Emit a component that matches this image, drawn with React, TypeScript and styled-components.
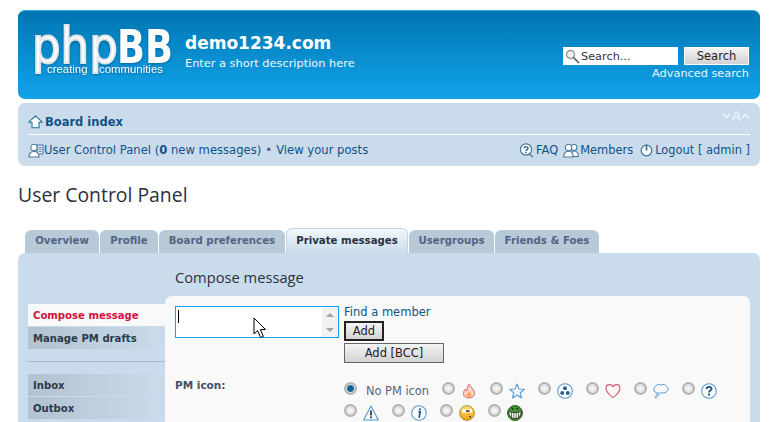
import styled, { createGlobalStyle } from "styled-components";

const GlobalStyle = createGlobalStyle`
  * {
    box-sizing: border-box;
  }
  html,
  body {
    margin: 0;
    padding: 0;
    height: 422px;
    overflow: hidden;
    background: #ffffff;
  }
  body {
    font-family: "DejaVu Sans", Verdana, sans-serif;
    font-size: 11px;
    color: #536482;
  }
`;

const tabs = [
  { label: "Overview", width: 74 },
  { label: "Profile", width: 58 },
  { label: "Board preferences", width: 126 },
  { label: "Private messages", width: 122, active: true },
  { label: "Usergroups", width: 85 },
  { label: "Friends & Foes", width: 104 },
];

const Logo = () => (
  <LogoSvg width="145" height="64" viewBox="0 0 145 64">
    <defs>
      <linearGradient id="logoFill" gradientUnits="userSpaceOnUse" x1="0" y1="2" x2="0" y2="48">
        <stop offset="0" stopColor="#ffffff" />
        <stop offset="0.6" stopColor="#e2e8ec" />
        <stop offset="1" stopColor="#b4c2ca" />
      </linearGradient>
    </defs>
    <g transform="translate(-1 38) scale(0.92 1)">
      <text
        x="0"
        y="0"
        fontFamily="'DejaVu Sans', sans-serif"
        fontSize="49"
        fill="url(#logoFill)"
        stroke="#dfe6ea"
        strokeWidth="2"
      >
        php
      </text>
    </g>
    <g transform="translate(84 38) scale(0.78 1)">
      <text
        x="0"
        y="0"
        fontFamily="'DejaVu Sans', sans-serif"
        fontWeight="700"
        fontSize="47"
        fill="url(#logoFill)"
      >
        BB
      </text>
    </g>
    <text x="14" y="48" fontFamily="'Liberation Sans', sans-serif" fontSize="11.4" fill="#ffffff">
      creating
    </text>
    <text x="66" y="48" fontFamily="'Liberation Sans', sans-serif" fontSize="11.4" fill="#ffffff">
      communities
    </text>
  </LogoSvg>
);

const SearchGlyph = () => (
  <svg width="15" height="15" viewBox="0 0 15 15">
    <circle cx="5.5" cy="5.5" r="4" fill="#eef1f2" stroke="#8f9699" strokeWidth="1.3" />
    <path d="M8.5 8.5 L13.5 13.5" stroke="#777d80" strokeWidth="2" strokeLinecap="round" />
  </svg>
);

const HomeIcon = () => (
  <svg width="15" height="14" viewBox="0 0 15 14">
    <path
      d="M7.5 0.8 L14.2 7.2 H11 V12.8 H4 V7.2 H0.8 Z"
      fill="#ffffff"
      stroke="#1f6fa3"
      strokeWidth="1.1"
      strokeLinejoin="round"
    />
  </svg>
);

const UcpIcon = () => (
  <svg width="16" height="15" viewBox="0 0 16 15">
    <rect x="9" y="2" width="6" height="9" fill="#dce8f1" stroke="#47769b" strokeWidth="1" />
    <path d="M10.5 4.5h3M10.5 6.5h3M10.5 8.5h3" stroke="#47769b" strokeWidth="0.8" />
    <circle cx="6" cy="4.5" r="3.2" fill="#ffffff" stroke="#47769b" strokeWidth="1.1" />
    <path d="M1 14 C1 9.5 3.5 8.5 6 8.5 C8.5 8.5 11 9.5 11 14 Z" fill="#ffffff" stroke="#47769b" strokeWidth="1.1" />
  </svg>
);

const FaqIcon = () => (
  <svg width="15" height="15" viewBox="0 0 15 15">
    <circle cx="7" cy="6.5" r="5.6" fill="#ffffff" stroke="#47769b" strokeWidth="1.2" />
    <path d="M10 11 L14 14" stroke="#47769b" strokeWidth="1.4" />
    <path d="M5 5.2 C5 3.4 9 3.4 9 5.4 C9 6.6 7 6.6 7 8" fill="none" stroke="#2f6a95" strokeWidth="1.5" />
    <rect x="6.2" y="8.8" width="1.6" height="1.5" fill="#2f6a95" />
  </svg>
);

const MembersIcon = () => (
  <svg width="16" height="15" viewBox="0 0 16 15">
    <circle cx="11" cy="4.5" r="3" fill="#ffffff" stroke="#47769b" strokeWidth="1.1" />
    <path d="M8 13.5 C8 9 9.5 8 11 8 C13.5 8 15.3 9.5 15.3 13.5 Z" fill="#ffffff" stroke="#47769b" strokeWidth="1.1" />
    <circle cx="5.5" cy="4.5" r="3.2" fill="#ffffff" stroke="#47769b" strokeWidth="1.1" />
    <path d="M0.8 14 C0.8 9.5 3 8.3 5.5 8.3 C8 8.3 10.2 9.5 10.2 14 Z" fill="#ffffff" stroke="#47769b" strokeWidth="1.1" />
  </svg>
);

const LogoutIcon = () => (
  <svg width="13" height="14" viewBox="0 0 13 14">
    <circle cx="6.5" cy="7.5" r="5.3" fill="#ffffff" stroke="#47769b" strokeWidth="1.2" />
    <path d="M6.5 1.5 V7.5" stroke="#47769b" strokeWidth="1.8" />
  </svg>
);

const ChevronDown = () => (
  <svg width="9" height="6" viewBox="0 0 9 6">
    <path d="M1 1 L4.5 4.5 L8 1" fill="none" stroke="#eef4f9" strokeWidth="1.6" />
  </svg>
);

const ChevronUp = () => (
  <svg width="9" height="6" viewBox="0 0 9 6">
    <path d="M1 5 L4.5 1.5 L8 5" fill="none" stroke="#eef4f9" strokeWidth="1.6" />
  </svg>
);

const Fire = () => (
  <svg width="16" height="16" viewBox="0 0 16 16">
    <path
      d="M8 1 C9 4 13.5 6 13.5 10.5 C13.5 13.5 11 15 8 15 C5 15 2.5 13.5 2.5 10.5 C2.5 8.5 3.5 7 4.5 6 C4.8 7 5 7.5 5.8 8 C5.8 5.5 7 3 8 1 Z"
      fill="#fbd5c8"
      stroke="#d9647a"
      strokeWidth="1"
    />
    <path d="M8 8 C9 9.5 10.5 10.5 10.5 12 C10.5 13.5 9.3 14 8 14 C6.7 14 5.5 13.5 5.5 12 C5.5 10.5 7.5 10 8 8 Z" fill="#f6a94f" />
  </svg>
);

const Star = () => (
  <svg width="16" height="16" viewBox="0 0 16 16">
    <path
      d="M8 1 L10 6 L15.4 6.3 L11.2 9.7 L12.6 15 L8 12 L3.4 15 L4.8 9.7 L0.6 6.3 L6 6 Z"
      fill="#f4f9fd"
      stroke="#5b9bd2"
      strokeWidth="1.1"
      strokeLinejoin="round"
    />
  </svg>
);

const Radiation = () => (
  <svg width="16" height="16" viewBox="0 0 16 16">
    <circle cx="8" cy="8" r="7.3" fill="#ffffff" stroke="#5a97cf" strokeWidth="1.1" />
    <circle cx="8" cy="5.2" r="2" fill="#2c5f91" />
    <circle cx="5.2" cy="10" r="2" fill="#2c5f91" />
    <circle cx="10.8" cy="10" r="2" fill="#2c5f91" />
  </svg>
);

const Heart = () => (
  <svg width="16" height="16" viewBox="0 0 16 16">
    <path
      d="M8 14.6 C4 11.5 1 9 1 5.4 C1 3 2.8 1.6 4.6 1.6 C6.2 1.6 7.4 2.4 8 3.6 C8.6 2.4 9.8 1.6 11.4 1.6 C13.2 1.6 15 3 15 5.4 C15 9 12 11.5 8 14.6 Z"
      fill="#fdf6f7"
      stroke="#cc5b74"
      strokeWidth="1.1"
    />
  </svg>
);

const Bubble = () => (
  <svg width="16" height="16" viewBox="0 0 16 16">
    <path
      d="M3 3 C4 1 7 1 8 2 C10 0.8 13 1.5 13.5 3.5 C15.5 4 15.8 7 14 8 C13.4 10 10.6 10.4 9 9.5 C8 10.5 6.4 10.5 5.4 10 C3 10.3 0.6 8.6 0.8 6 C0.9 4.6 1.8 3.4 3 3 Z"
      fill="#f4f9fd"
      stroke="#5b9bd2"
      strokeWidth="1"
    />
    <circle cx="4.4" cy="12" r="1.2" fill="#f4f9fd" stroke="#5b9bd2" strokeWidth="0.9" />
    <circle cx="2.6" cy="14.3" r="0.9" fill="#f4f9fd" stroke="#5b9bd2" strokeWidth="0.8" />
  </svg>
);

const Question = () => (
  <svg width="16" height="16" viewBox="0 0 16 16">
    <circle cx="8" cy="8" r="7.3" fill="#ffffff" stroke="#5a97cf" strokeWidth="1.1" />
    <path d="M5.6 6 C5.6 3.4 10.6 3.2 10.6 5.8 C10.6 7.6 8 7.4 8 9.6" fill="none" stroke="#1e5a8c" strokeWidth="1.9" />
    <rect x="7" y="10.6" width="2" height="2" fill="#1e5a8c" />
  </svg>
);

const Warning = () => (
  <svg width="16" height="16" viewBox="0 0 16 16">
    <path d="M8 1 L15.4 15 H0.6 Z" fill="#f4f9fd" stroke="#5a97cf" strokeWidth="1.1" strokeLinejoin="round" />
    <path d="M8 5.5 V10.5" stroke="#34424f" strokeWidth="1.8" />
    <rect x="7.1" y="11.4" width="1.8" height="1.8" fill="#34424f" />
  </svg>
);

const Info = () => (
  <svg width="16" height="16" viewBox="0 0 16 16">
    <circle cx="8" cy="8" r="7.3" fill="#ffffff" stroke="#5a97cf" strokeWidth="1.1" />
    <path d="M7.4 6.8 H9.2 L8.2 11.8 H9.2" fill="none" stroke="#1e5a8c" strokeWidth="1.7" />
    <circle cx="9" cy="4.4" r="1.1" fill="#1e5a8c" />
  </svg>
);

const Smirk = () => (
  <svg width="16" height="16" viewBox="0 0 16 16">
    <defs>
      <linearGradient id="smirkFill" x1="0" y1="0" x2="0" y2="1">
        <stop offset="0" stopColor="#ffe27a" />
        <stop offset="1" stopColor="#f0a010" />
      </linearGradient>
    </defs>
    <circle cx="8" cy="8" r="7.4" fill="url(#smirkFill)" stroke="#9b7a1e" strokeWidth="0.8" />
    <rect x="3" y="4.5" width="10" height="3" fill="#ffffff" />
    <rect x="7" y="5.3" width="3.5" height="1.5" fill="#222222" />
    <path d="M9.5 12 L12 10.8 V12.6 Z" fill="#222222" />
  </svg>
);

const Grin = () => (
  <svg width="16" height="16" viewBox="0 0 16 16">
    <circle cx="8" cy="8" r="7.4" fill="#3f9a35" stroke="#34421f" strokeWidth="1" />
    <path d="M2 6.5 C5 8 11 8 14 6.5 C14.4 10.5 11.5 13.6 8 13.6 C4.5 13.6 1.6 10.5 2 6.5 Z" fill="#ffffff" stroke="#1c2b12" strokeWidth="0.8" />
    <path d="M4.5 7.5 V12.4 M6.8 7.8 V13.4 M9.2 7.8 V13.4 M11.5 7.5 V12.4" stroke="#1c2b12" strokeWidth="0.7" />
    <circle cx="5.6" cy="3.8" r="1" fill="#1c2b12" />
    <circle cx="10.4" cy="3.8" r="1" fill="#1c2b12" />
  </svg>
);

const pmIcons = [Fire, Star, Radiation, Heart, Bubble, Question, Warning, Info, Smirk, Grin];

const App = () => {
  return (
    <Wrap>
      <GlobalStyle />
      <Headerbar>
        <Brand>
          <Logo />
          <SiteInfo>
            <h1>demo1234.com</h1>
            <p>Enter a short description here</p>
          </SiteInfo>
        </Brand>
        <SearchArea>
          <SearchRow>
            <SearchField>
              <SearchGlyph />
              <span>Search...</span>
            </SearchField>
            <SearchButton>Search</SearchButton>
          </SearchRow>
          <AdvancedLink>Advanced search</AdvancedLink>
        </SearchArea>
      </Headerbar>

      <Navbar>
        <NavTop>
          <BoardIndex>
            <HomeIcon />
            <b>Board index</b>
          </BoardIndex>
          <FontSizer>
            <ChevronDown />
            <span>A</span>
            <ChevronUp />
          </FontSizer>
        </NavTop>
        <NavBottom>
          <NavLinks>
            <NavLink>
              <UcpIcon />
              User Control Panel (<b>0</b>&nbsp;new messages)
            </NavLink>
            <Bullet>•</Bullet>
            <span>View your posts</span>
          </NavLinks>
          <NavRight>
            <NavLink $gap={2}>
              <FaqIcon />
              FAQ
            </NavLink>
            <NavLink $gap={1}>
              <MembersIcon />
              Members
            </NavLink>
            <NavLink $gap={2} $offset={2}>
              <LogoutIcon />
              Logout [ admin ]
            </NavLink>
          </NavRight>
        </NavBottom>
      </Navbar>

      <PageTitle>User Control Panel</PageTitle>

      <Tabs>
        {tabs.map((tab) => (
          <Tab key={tab.label} $active={tab.active} $width={tab.width}>
            {tab.label}
          </Tab>
        ))}
      </Tabs>

      <Panel>
        <Sidebar>
          <MenuItem $active>Compose message</MenuItem>
          <MenuItem>Manage PM drafts</MenuItem>
          <MenuRule />
          <MenuItem>Inbox</MenuItem>
          <MenuItem>Outbox</MenuItem>
        </Sidebar>
        <Main>
          <Heading>Compose message</Heading>
          <FormBox>
            <RecipientRow>
              <FakeTextarea>
                <Caret />
                <Scrollbar>
                  <ArrowUp />
                  <ArrowDown />
                </Scrollbar>
                <Pointer width="14" height="22" viewBox="0 0 14 22">
                  <path
                    d="M1 1 V17 L4.6 13.6 L7.6 20.6 L10.4 19.4 L7.4 12.6 L12.4 12.4 Z"
                    fill="#ffffff"
                    stroke="#000000"
                    strokeWidth="1"
                  />
                </Pointer>
              </FakeTextarea>
              <RecipientActions>
                <span>Find a member</span>
                <AddButton $focused>Add</AddButton>
                <AddButton $wide>Add [BCC]</AddButton>
              </RecipientActions>
            </RecipientRow>
            <IconRow>
              <IconLabel>PM icon:</IconLabel>
              <IconChoices>
                <IconChoice $wide>
                  <Radio $checked />
                  <NoIconText>No PM icon</NoIconText>
                </IconChoice>
                {pmIcons.map((Icon, i) => (
                  <IconChoice key={i}>
                    <Radio />
                    <Icon />
                  </IconChoice>
                ))}
              </IconChoices>
            </IconRow>
          </FormBox>
        </Main>
      </Panel>
    </Wrap>
  );
};
export default App;

const Wrap = styled.div`
  width: 742px;
  height: 422px;
  margin-left: 18px;
  padding-top: 10px;
  overflow: hidden;
`;

const Headerbar = styled.div`
  height: 89px;
  border-radius: 7px;
  border-top: 1px solid #2aa9e6;
  background: linear-gradient(#0076b1, #12a3eb);
  display: flex;
  justify-content: space-between;
  padding: 0 11px 0 15px;
  color: #ffffff;
`;

const Brand = styled.div`
  display: flex;
  align-items: flex-start;
`;

const LogoSvg = styled.svg`
  margin-top: 14px;
  overflow: visible;
  filter: drop-shadow(0 1px 1px rgba(0, 60, 100, 0.5));
`;

const SiteInfo = styled.div`
  margin: 21px 0 0 7px;
  h1 {
    margin: 0;
    font-size: 17px;
    line-height: 22px;
    font-weight: 700;
  }
  p {
    margin: 1px 0 0;
    font-size: 11.35px;
    line-height: 16px;
    color: #f0f8fd;
  }
`;

const SearchArea = styled.div`
  display: flex;
  flex-direction: column;
  align-items: flex-end;
  padding-top: 36px;
`;

const SearchRow = styled.div`
  display: flex;
  gap: 6px;
`;

const SearchField = styled.div`
  width: 115px;
  height: 18px;
  background: #ffffff;
  color: #333333;
  font-size: 11.3px;
  display: flex;
  align-items: center;
  gap: 1px;
  padding-left: 2px;
`;

const SearchButton = styled.div`
  width: 65px;
  height: 18px;
  background: linear-gradient(#f4f4f4, #d2d2d2);
  border: 1px solid #ffffff;
  color: #222222;
  font-size: 11.5px;
  line-height: 16px;
  text-align: center;
`;

const AdvancedLink = styled.div`
  margin-top: 1px;
  font-size: 11.3px;
  line-height: 15px;
  color: #e6f5fc;
`;

const Navbar = styled.div`
  margin-top: 4px;
  height: 63px;
  background: #cadceb;
  border-radius: 7px;
  padding: 0 10px;
  color: #105289;
`;

const NavTop = styled.div`
  height: 32px;
  display: flex;
  align-items: flex-start;
  justify-content: space-between;
  border-bottom: 1px solid #ffffff;
`;

const BoardIndex = styled.div`
  display: flex;
  align-items: center;
  gap: 2px;
  font-size: 11.5px;
  margin-top: 10px;
  height: 18px;
`;

const FontSizer = styled.div`
  display: flex;
  align-items: center;
  height: 14px;
  margin-top: 6px;
  color: #eef4f9;
  font-size: 14px;
`;

const NavBottom = styled.div`
  height: 30px;
  display: flex;
  align-items: center;
  justify-content: space-between;
  font-size: 11.6px;
`;

const NavLinks = styled.div`
  display: flex;
  align-items: center;
`;

const NavLink = styled.span<{ $gap?: number; $offset?: number }>`
  display: inline-flex;
  align-items: center;
  white-space: pre;
  column-gap: ${(p) => p.$gap ?? 0}px;
  margin-left: ${(p) => p.$offset ?? 0}px;
`;

const Bullet = styled.span`
  margin: 0 4px;
  color: #536482;
`;

const NavRight = styled.div`
  display: flex;
  gap: 5px;
  font-size: 11.45px;
`;

const PageTitle = styled.h2`
  margin: 17px 0 0;
  font-family: "Open Sans", sans-serif;
  font-size: 19.4px;
  line-height: 24px;
  font-weight: 400;
  color: #28313f;
`;

const Tabs = styled.div`
  display: flex;
  align-items: flex-end;
  gap: 1px;
  margin-top: 21px;
  padding-left: 7px;
  height: 25px;
`;

const Tab = styled.div<{ $active?: boolean; $width: number }>`
  width: ${(p) => p.$width}px;
  height: ${(p) => (p.$active ? 25 : 23)}px;
  line-height: ${(p) => (p.$active ? 23 : 22)}px;
  text-align: center;
  font-size: 10.2px;
  font-weight: 700;
  border-radius: 6px 6px 0 0;
  color: ${(p) => (p.$active ? "#28313f" : "#536482")};
  background: ${(p) => (p.$active ? "linear-gradient(#f2f8fd, #cadceb)" : "#b8c9d8")};
  ${(p) => p.$active && "border: 1px solid #c2d4e3; border-bottom: 0;"}
`;

const Panel = styled.div`
  height: 300px;
  background: #cadceb;
  border-radius: 7px 7px 0 0;
  display: flex;
  padding: 0 10px;
`;

const Sidebar = styled.div`
  width: 137px;
  padding-top: 51px;
  flex-shrink: 0;
`;

const MenuItem = styled.div<{ $active?: boolean }>`
  height: 22px;
  line-height: 24px;
  margin-bottom: 1px;
  padding-left: 5px;
  font-size: 10.1px;
  font-weight: 700;
  color: ${(p) => (p.$active ? "#d31141" : "#2d3a4c")};
  background: ${(p) => (p.$active ? "#f9f9f9" : "linear-gradient(90deg, #b2c2cf, #cadceb)")};
`;

const MenuRule = styled.div`
  height: 1px;
  margin: 12px 0;
  background: #a4b8ca;
`;

const Main = styled.div`
  flex: 1;
  min-width: 0;
`;

const Heading = styled.h3`
  margin: 0;
  height: 43px;
  padding: 14px 0 0 10px;
  font-family: "Open Sans", sans-serif;
  font-size: 14.7px;
  line-height: 20px;
  font-weight: 400;
  color: #28313f;
`;

const FormBox = styled.div`
  height: 260px;
  background: #f9f9f9;
  border-radius: 7px 7px 0 0;
  padding: 10px 0 0 10px;
`;

const RecipientRow = styled.div`
  display: flex;
  gap: 5px;
  align-items: flex-start;
`;

const FakeTextarea = styled.div`
  position: relative;
  width: 164px;
  height: 32px;
  background: #ffffff;
  border: 1px solid #12a3eb;
`;

const Caret = styled.div`
  position: absolute;
  left: 2px;
  top: 3px;
  width: 1px;
  height: 13px;
  background: #000000;
`;

const Scrollbar = styled.div`
  position: absolute;
  right: 0;
  top: 0;
  bottom: 0;
  width: 16px;
  background: #f1f1f1;
  display: flex;
  flex-direction: column;
  justify-content: space-between;
  align-items: center;
  padding: 6px 0 5px;
`;

const ArrowUp = styled.div`
  width: 0;
  height: 0;
  border-left: 4px solid transparent;
  border-right: 4px solid transparent;
  border-bottom: 4px solid #a3a3a3;
`;

const ArrowDown = styled(ArrowUp)`
  border-bottom: 0;
  border-top: 4px solid #a3a3a3;
`;

const Pointer = styled.svg`
  position: absolute;
  left: 77px;
  top: 10px;
  overflow: visible;
`;

const RecipientActions = styled.div`
  display: flex;
  flex-direction: column;
  align-items: flex-start;
  font-size: 11.5px;
  color: #105289;
  span {
    line-height: 13px;
    margin-bottom: 2px;
  }
`;

const AddButton = styled.div<{ $focused?: boolean; $wide?: boolean }>`
  width: ${(p) => (p.$wide ? 100 : 40)}px;
  height: 20px;
  margin-bottom: 2px;
  text-align: center;
  line-height: ${(p) => (p.$focused ? 16 : 18)}px;
  color: #222222;
  background: linear-gradient(#f4f4f4, #d2d2d2);
  border: ${(p) => (p.$focused ? "2px solid #222222" : "1px solid #666666")};
`;

const IconRow = styled.div`
  display: flex;
  margin-top: 14px;
`;

const IconLabel = styled.div`
  width: 169px;
  flex-shrink: 0;
  font-size: 10.5px;
  line-height: 13px;
  font-weight: 700;
  color: #425067;
`;

const IconChoices = styled.div`
  display: flex;
  flex-wrap: wrap;
  row-gap: 3px;
  padding-top: 2px;
`;

const IconChoice = styled.div<{ $wide?: boolean }>`
  display: flex;
  align-items: center;
  gap: 6px;
  width: ${(p) => (p.$wide ? 98 : 48)}px;
  height: 19px;
`;

const Radio = styled.span<{ $checked?: boolean }>`
  display: block;
  width: 13px;
  height: 13px;
  flex-shrink: 0;
  margin-top: -5px;
  border-radius: 50%;
  border: 2px solid #b4b4b4;
  background: ${(p) =>
    p.$checked
      ? "radial-gradient(circle, #12527f 0, #1c6ea4 3px, #dcdcdc 4px)"
      : "radial-gradient(circle, #fafafa 0, #f0f0f0 2px, #d6d6d6 5px)"};
`;

const NoIconText = styled.span`
  font-size: 11.4px;
  margin-left: 3px;
  color: #536482;
`;
